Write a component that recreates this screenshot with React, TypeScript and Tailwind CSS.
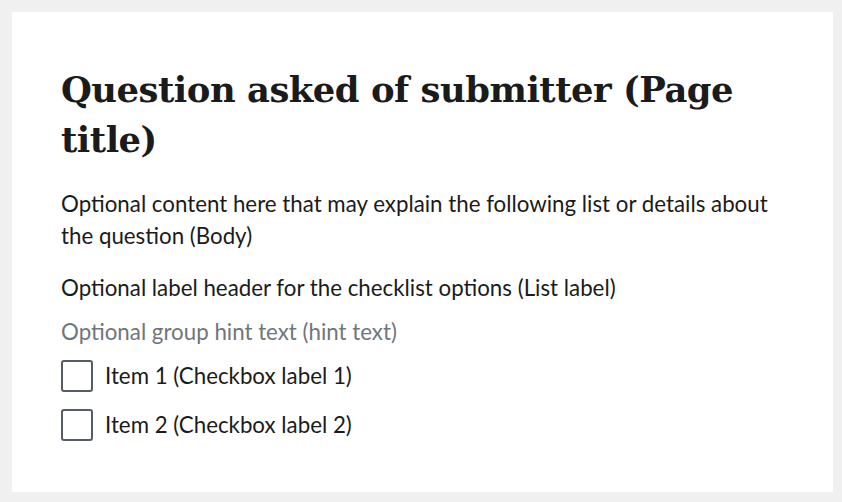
import React from 'react';

const items = ['Item 1 (Checkbox label 1)', 'Item 2 (Checkbox label 2)'];

export default function App() {
  return (
    <div className="h-screen w-full bg-[#f0f0f0] pt-[12px] pl-[12px] pr-[9px] pb-[10px]">
      <div className="h-full bg-white pl-[49px] pr-[40px] pt-[53px] text-[#1b1b1b]">
        {/* Page title */}
        <h1 className="w-[700px] font-['DejaVu_Serif',serif] text-[35.4px] font-bold leading-[50px] tracking-[-0.5px]">
          Question asked of submitter (Page title)
        </h1>

        <div className="font-['Lato',sans-serif] text-[22.3px]">
          {/* Body */}
          <p className="mt-[23px] w-[740px] leading-[32px]">
            Optional content here that may explain the following list or details about the question (Body)
          </p>

          {/* List label */}
          <p className="mt-[20px] leading-[32px]">Optional label header for the checklist options (List label)</p>

          {/* Hint */}
          <p className="mt-[12px] leading-[32px] text-[#71767a]">Optional group hint text (hint text)</p>

          <div className="mt-[12px] flex flex-col gap-[17px]">
            {items.map((item) => (
              <label key={item} className="flex items-center gap-[12px]">
                <span className="h-[32px] w-[32px] shrink-0 rounded-[3px] border-[2.5px] border-[#565c65] bg-white" />
                <span className="leading-[32px]">{item}</span>
              </label>
            ))}
          </div>
        </div>
      </div>
    </div>
  );
}
